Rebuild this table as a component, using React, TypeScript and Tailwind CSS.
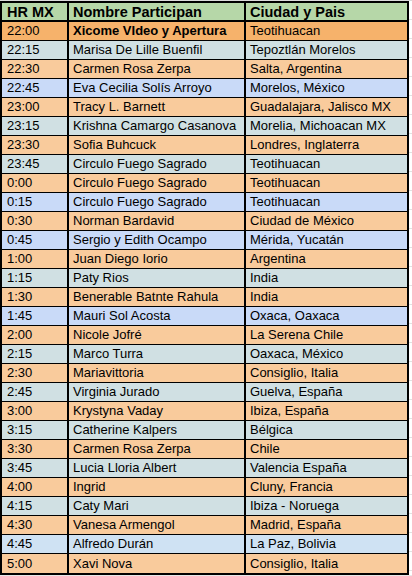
import React from "react";

type Row = [string, string, string, string, boolean?];

const rows: Row[] = [
  ["22:00", "Xicome VIdeo y Apertura", "Teotihuacan", "bg-[#f6b26b]", true],
  ["22:15", "Marisa De Lille Buenfil", "Tepoztlán Morelos", "bg-[#d0e0e3]"],
  ["22:30", "Carmen Rosa Zerpa", "Salta, Argentina", "bg-[#f9cb9c]"],
  ["22:45", "Eva Cecilia Solís Arroyo", "Morelos, México", "bg-[#c9daf8]"],
  ["23:00", "Tracy L. Barnett", "Guadalajara, Jalisco MX", "bg-[#f9cb9c]"],
  ["23:15", "Krishna Camargo Casanova", "Morelia, Michoacan MX", "bg-[#d0e0e3]"],
  ["23:30", "Sofia Buhcuck", "Londres, Inglaterra", "bg-[#f9cb9c]"],
  ["23:45", "Circulo Fuego Sagrado", "Teotihuacan", "bg-[#d0e0e3]"],
  ["0:00", "Circulo Fuego Sagrado", "Teotihuacan", "bg-[#f9cb9c]"],
  ["0:15", "Circulo Fuego Sagrado", "Teotihuacan", "bg-[#c9daf8]"],
  ["0:30", "Norman Bardavid", "Ciudad de México", "bg-[#f9cb9c]"],
  ["0:45", "Sergio y Edith Ocampo", "Mérida, Yucatán", "bg-[#c9daf8]"],
  ["1:00", "Juan Diego Iorio", "Argentina", "bg-[#f9cb9c]"],
  ["1:15", "Paty Rios", "India", "bg-[#d0e0e3]"],
  ["1:30", "Benerable Batnte Rahula", "India", "bg-[#f9cb9c]"],
  ["1:45", "Mauri Sol Acosta", "Oxaca, Oaxaca", "bg-[#c9daf8]"],
  ["2:00", "Nicole Jofré", "La Serena Chile", "bg-[#f9cb9c]"],
  ["2:15", "Marco Turra", "Oaxaca, México", "bg-[#d0e0e3]"],
  ["2:30", "Mariavittoria", "Consiglio, Italia", "bg-[#f9cb9c]"],
  ["2:45", "Virginia Jurado", "Guelva, España", "bg-[#d0e0e3]"],
  ["3:00", "Krystyna Vaday", "Ibiza, España", "bg-[#f9cb9c]"],
  ["3:15", "Catherine Kalpers", "Bélgica", "bg-[#d0e0e3]"],
  ["3:30", "Carmen Rosa Zerpa", "Chile", "bg-[#f9cb9c]"],
  ["3:45", "Lucia Lloria Albert", "Valencia España", "bg-[#d0e0e3]"],
  ["4:00", "Ingrid", "Cluny, Francia", "bg-[#f9cb9c]"],
  ["4:15", "Caty Mari", "Ibiza - Noruega", "bg-[#d0e0e3]"],
  ["4:30", "Vanesa Armengol", "Madrid, España", "bg-[#f9cb9c]"],
  ["4:45", "Alfredo Durán", "La Paz, Bolivia", "bg-[#cfe2f3]"],
  ["5:00", "Xavi Nova", "Consiglio, Italia", "bg-[#f9cb9c]"],
];

export default function App() {
  return (
    <div
      className="w-[412px] h-[576px] bg-white overflow-hidden flex flex-col text-[13px] text-black leading-none"
      style={{ fontFamily: '"Liberation Sans", Arial, sans-serif' }}
    >
      <div className="h-[1px] bg-[#dadada] shrink-0" />
      <div className="flex shrink-0">
        <div className="w-[409px] border-2 border-black flex flex-col">
          <div className="flex h-[19px] bg-[#b6d7a8] border-b-2 border-black font-bold text-[14.5px]">
            <div className="w-[67px] border-r-2 border-black flex items-end pl-[5px] pb-[1px]">HR MX</div>
            <div className="w-[177px] border-r-2 border-black flex items-end pl-[4px] pb-[1px] whitespace-nowrap overflow-hidden">Nombre Participan</div>
            <div className="flex-1 flex items-end pl-[4px] pb-[1px]">Ciudad y Pais</div>
          </div>
          {rows.map(([t, n, c, bg, b], i) => (
            <div
              key={i}
              className={`flex h-[19px] ${bg} ${i < rows.length - 1 ? "border-b border-black" : ""} ${b ? "font-bold" : ""}`}
            >
              <div className={`w-[67px] border-r-2 border-black flex items-end pl-[5px] pb-[3px] ${b ? "font-normal" : ""}`}>{t}</div>
              <div className="w-[177px] border-r-2 border-black flex items-end pl-[4px] pb-[3px] whitespace-nowrap overflow-hidden">{n}</div>
              <div className={`flex-1 flex items-end pl-[4px] pb-[3px] whitespace-nowrap overflow-hidden ${b ? "font-normal" : ""}`}>{c}</div>
            </div>
          ))}
        </div>
        <div className="flex-1 flex flex-col">
          {Array.from({ length: 30 }).map((_, i) => (
            <div key={i} className="h-[19px] border-b border-[#e2e2e2]" />
          ))}
        </div>
      </div>
      <div className="flex-1 bg-[#e8e8e8]" />
    </div>
  );
}
